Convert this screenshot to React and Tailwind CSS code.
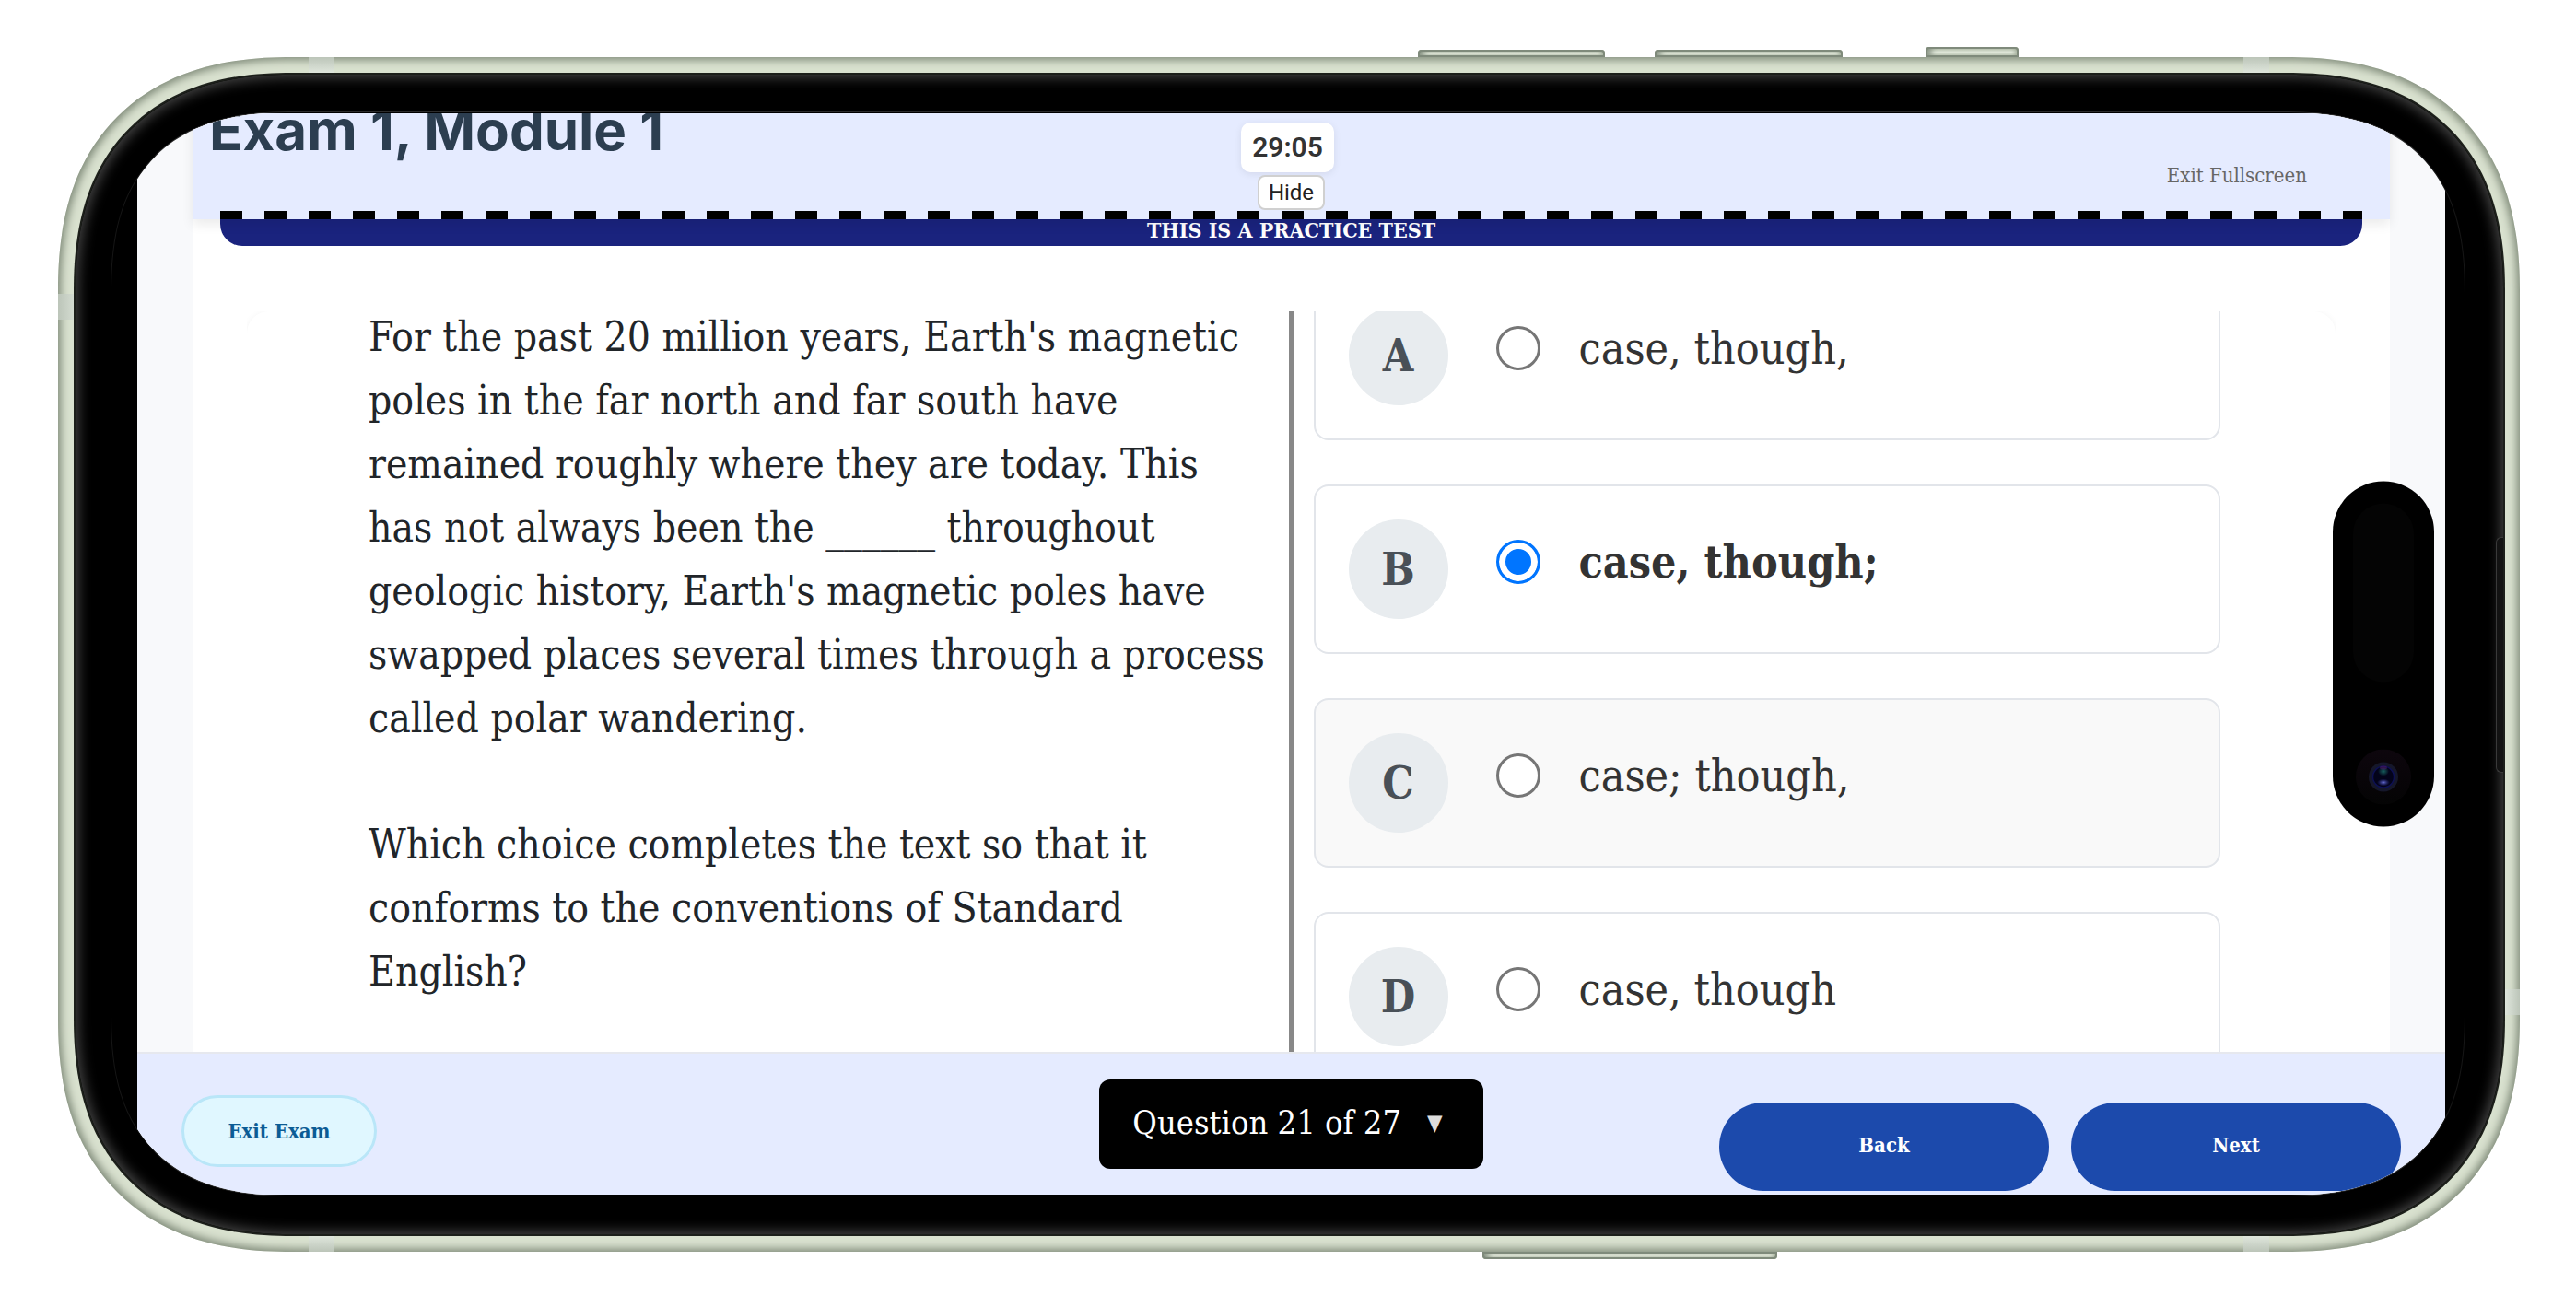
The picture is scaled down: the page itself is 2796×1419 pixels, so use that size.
import { useState } from "react";

const CHOICES = [
  { letter: "A", text: "case, though," },
  { letter: "B", text: "case, though;" },
  { letter: "C", text: "case; though,", shaded: true },
  { letter: "D", text: "case, though" },
];

const METAL_KEY =
  "bg-linear-to-b from-[#aab5a1] via-[#dfe6d8] to-[#b3bdaa] shadow-[inset_0_0_0_2px_#7f8a7b,inset_8px_0_6px_-2px_#8a9586,inset_-6px_0_4px_-2px_#a5b09d]";

function TopKeys() {
  return (
    <div className="grid h-[62px] shrink-0 grid-cols-[1539fr_203fr_54fr_204fr_90fr_101fr_605fr] items-end">
      <span className={`col-start-2 h-2 rounded-t-[4px] ${METAL_KEY}`} />
      <span className={`col-start-4 h-2 rounded-t-[4px] ${METAL_KEY}`} />
      <span className={`col-start-6 h-[11px] rounded-t-[4px] ${METAL_KEY}`} />
    </div>
  );
}

function BottomKey() {
  return (
    <div className="grid h-[60px] shrink-0 grid-cols-[1609fr_320fr_867fr] items-start">
      <span className={`col-start-2 h-2 rounded-b-[4px] ${METAL_KEY}`} />
    </div>
  );
}

function AntennaBands() {
  return (
    <>
      <span className="absolute top-0 left-[272px] h-[17px] w-7 bg-linear-to-b from-[#bcc5b9] to-[#dfe6dc]" />
      <span className="absolute top-0 right-[272px] h-[17px] w-7 bg-linear-to-b from-[#bcc5b9] to-[#dfe6dc]" />
      <span className="absolute bottom-0 left-[272px] h-[17px] w-7 bg-linear-to-t from-[#bcc5b9] to-[#dfe6dc]" />
      <span className="absolute right-[272px] bottom-0 h-[17px] w-7 bg-linear-to-t from-[#bcc5b9] to-[#dfe6dc]" />
      <span className="absolute top-[257px] left-0 h-7 w-[17px] bg-linear-to-r from-[#bcc5b9] to-[#d3dbd0]" />
      <span className="absolute right-0 bottom-[257px] h-7 w-4 bg-linear-to-l from-[#bcc5b9] to-[#dfe6dc]" />
    </>
  );
}

function Island() {
  return (
    <div className="absolute top-1/2 right-[33px] flex h-[375px] w-[110px] -translate-y-1/2 flex-col items-center justify-between rounded-full bg-black pt-6 pb-6">
      <span className="h-[194px] w-[66px] rounded-full bg-[#040404]" />
      <svg viewBox="0 0 60 60" className="size-[60px]" aria-hidden="true">
        <defs>
          <linearGradient id="lensOuter" x1="0" y1="0" x2="0" y2="1">
            <stop offset="0" stopColor="#0d060d" />
            <stop offset="1" stopColor="#040404" />
          </linearGradient>
          <radialGradient id="glintTop">
            <stop offset="0" stopColor="#17605f" />
            <stop offset="1" stopColor="#17605f" stopOpacity="0" />
          </radialGradient>
          <radialGradient id="glintBottom">
            <stop offset="0" stopColor="#6a70d8" />
            <stop offset="1" stopColor="#2a2f90" stopOpacity="0" />
          </radialGradient>
        </defs>
        <circle cx="30" cy="30" r="30" fill="url(#lensOuter)" />
        <circle cx="30" cy="30" r="16" fill="#15172a" />
        <circle cx="30" cy="30" r="11.5" fill="#03031a" stroke="#0d1052" strokeWidth="1.5" />
        <ellipse cx="30" cy="24" rx="6" ry="5" fill="url(#glintTop)" />
        <ellipse cx="30" cy="20" rx="4" ry="2" fill="#571a72" opacity="0.5" />
        <ellipse cx="30" cy="36" rx="7" ry="4" fill="url(#glintBottom)" />
      </svg>
    </div>
  );
}

function Header() {
  return (
    <header className="relative z-10 flex h-[115px] shrink-0 flex-col justify-end bg-[#e5ebff] shadow-[0_6px_12px_rgba(0,0,0,0.08)]">
      <div className="grid min-h-0 flex-1 grid-cols-[1fr_auto_1fr]">
        <h1 className="-mt-[22px] pl-[18px] font-['Inter',sans-serif] text-[60px] leading-[80px] font-bold whitespace-nowrap text-[#2c3e50]">
          Exam 1, Module 1
        </h1>
        <div className="flex flex-col items-center pt-2.5 font-['Roboto',sans-serif]">
          <time className="mr-2 rounded-[10px] bg-white px-3 text-[30px] leading-[54px] font-semibold text-[#333] shadow-[0_2px_8px_rgba(0,0,0,0.08)]">
            29:05
          </time>
          <button
            type="button"
            className="mt-[3px] rounded-[8px] border-2 border-[#d0d0d0] bg-white px-2.5 text-[24px] leading-[34px] text-[#222]"
          >
            Hide
          </button>
        </div>
        <a
          href="#exit-fullscreen"
          className="mt-[52px] mr-[90px] self-start justify-self-end text-[22px] leading-8 text-[#666]"
        >
          Exit Fullscreen
        </a>
      </div>
      <div className="mr-[30px] ml-[30px] h-[9px] shrink-0 bg-[repeating-linear-gradient(90deg,#000_0_24px,transparent_24px_48px)]" />
    </header>
  );
}

function Choice({ choice, checked, onSelect }) {
  return (
    <label
      className={`flex shrink-0 items-start rounded-[16px] border-2 border-[#e2e5ea] p-9 text-[48px] text-[#333] ${
        choice.shaded ? "bg-[#f9f9f9]" : "bg-white"
      }`}
    >
      <span className="flex size-[108px] items-center justify-center rounded-full bg-[#e8ecef] font-bold text-[#495057]">
        {choice.letter}
      </span>
      <span className="ml-[52px] flex h-[92px] items-center gap-[42px]">
        <input
          type="radio"
          name="answer"
          value={choice.letter}
          checked={checked}
          onChange={onSelect}
          className="size-12 shrink-0 appearance-none rounded-full border-3 border-[#767676] bg-white checked:border-[#0075ff] checked:bg-[#0075ff] checked:shadow-[inset_0_0_0_7px_#fff]"
        />
        <span className={checked ? "font-bold" : ""}>{choice.text}</span>
      </span>
    </label>
  );
}

function Question() {
  const [answer, setAnswer] = useState("B");
  return (
    <main className="mx-[59px] mt-[71px] min-h-0 flex-1 overflow-hidden">
      <div className="grid h-full grid-cols-[1fr_6px_1fr] rounded-t-[24px] bg-white shadow-[0_2px_8px_rgba(0,0,0,0.06)]">
        <section className="-mt-[7px] pr-5 pl-[132px] text-[44px] leading-[69px] text-[#212529]">
          <p>
            For the past 20 million years, Earth's magnetic poles in the far north and far south have
            remained roughly where they are today. This has not always been the ______ throughout
            geologic history, Earth's magnetic poles have swapped places several times through a
            process called polar wandering.
          </p>
          <p className="mt-[68px]">
            Which choice completes the text so that it conforms to the conventions of Standard
            English?
          </p>
        </section>
        <div className="bg-[#888]" />
        <fieldset className="-mt-11 mr-[125px] ml-[21px] flex flex-col gap-12">
          {CHOICES.map((choice) => (
            <Choice
              key={choice.letter}
              choice={choice}
              checked={answer === choice.letter}
              onSelect={() => setAnswer(choice.letter)}
            />
          ))}
        </fieldset>
      </div>
    </main>
  );
}

function Footer() {
  return (
    <footer className="relative grid h-[155px] shrink-0 grid-cols-[1fr_auto_1fr] items-start border-t-2 border-[#e6e8ee] bg-[#e5ebff] px-12 pt-7">
      <button
        type="button"
        className="mt-[17px] h-[78px] w-[212px] rounded-full border-3 border-[#b9e6f8] bg-[#e0f7ff] text-[22px] font-bold text-[#0b5c95]"
      >
        Exit Exam
      </button>
      <button
        type="button"
        className="flex h-[97px] items-center gap-7 rounded-[12px] bg-black pr-11 pb-1 pl-9 text-[36px] text-white"
      >
        Question 21 of 27
        <span className="text-[24px] text-[#ddd]">▼</span>
      </button>
      <div className="mt-[25px] flex gap-6 justify-self-end text-[22px] font-bold text-white">
        <button type="button" className="h-24 w-[358px] rounded-full bg-[#1c4aac] pb-1">
          Back
        </button>
        <button type="button" className="h-24 w-[358px] rounded-full bg-[#1c4aac] pb-1">
          Next
        </button>
      </div>
    </footer>
  );
}

function Screen() {
  return (
    <div className="flex h-full flex-col overflow-hidden bg-[#f8f9fb] font-['DejaVu_Serif_Condensed','DejaVu_Serif',serif]">
      <div className="mx-[60px] flex min-h-0 flex-1 flex-col bg-white">
        <Header />
        <div className="mx-[30px] h-[29px] shrink-0 rounded-b-[24px] bg-[#1a237e] text-center text-[23px] leading-6 font-bold text-white">
          THIS IS A PRACTICE TEST
        </div>
        <Question />
      </div>
      <Footer />
    </div>
  );
}

export default function App() {
  return (
    <div className="flex h-screen flex-col overflow-hidden bg-white">
      <TopKeys />
      <div className="relative mr-[61px] ml-[63px] min-h-0 flex-1 overflow-hidden rounded-[254px] bg-[#d9e1cf] py-[17px] pr-4 pl-[17px] shadow-[inset_0_0_10px_3px_#7d8877] [corner-shape:superellipse(1.24)]">
        <AntennaBands />
        <div className="relative h-full rounded-[237px] border-2 border-[#1c1f1a] bg-black pt-10 pr-[41px] pb-[41px] pl-[38px] shadow-[inset_0_0_14px_3px_#454545] [corner-shape:superellipse(1.24)]">
          <span className="absolute top-1/2 right-0 h-[256px] w-2 -translate-y-1/2 rounded-l-[6px] border border-r-0 border-[#3a3a3a] bg-[#131313]" />
          <div className="relative h-full overflow-hidden rounded-[200px] border border-x-[#161616] border-y-[#2c2c2c] bg-black py-px pr-[21px] pl-7 [corner-shape:superellipse(1.34)]">
            <Screen />
            <Island />
          </div>
        </div>
      </div>
      <BottomKey />
    </div>
  );
}
